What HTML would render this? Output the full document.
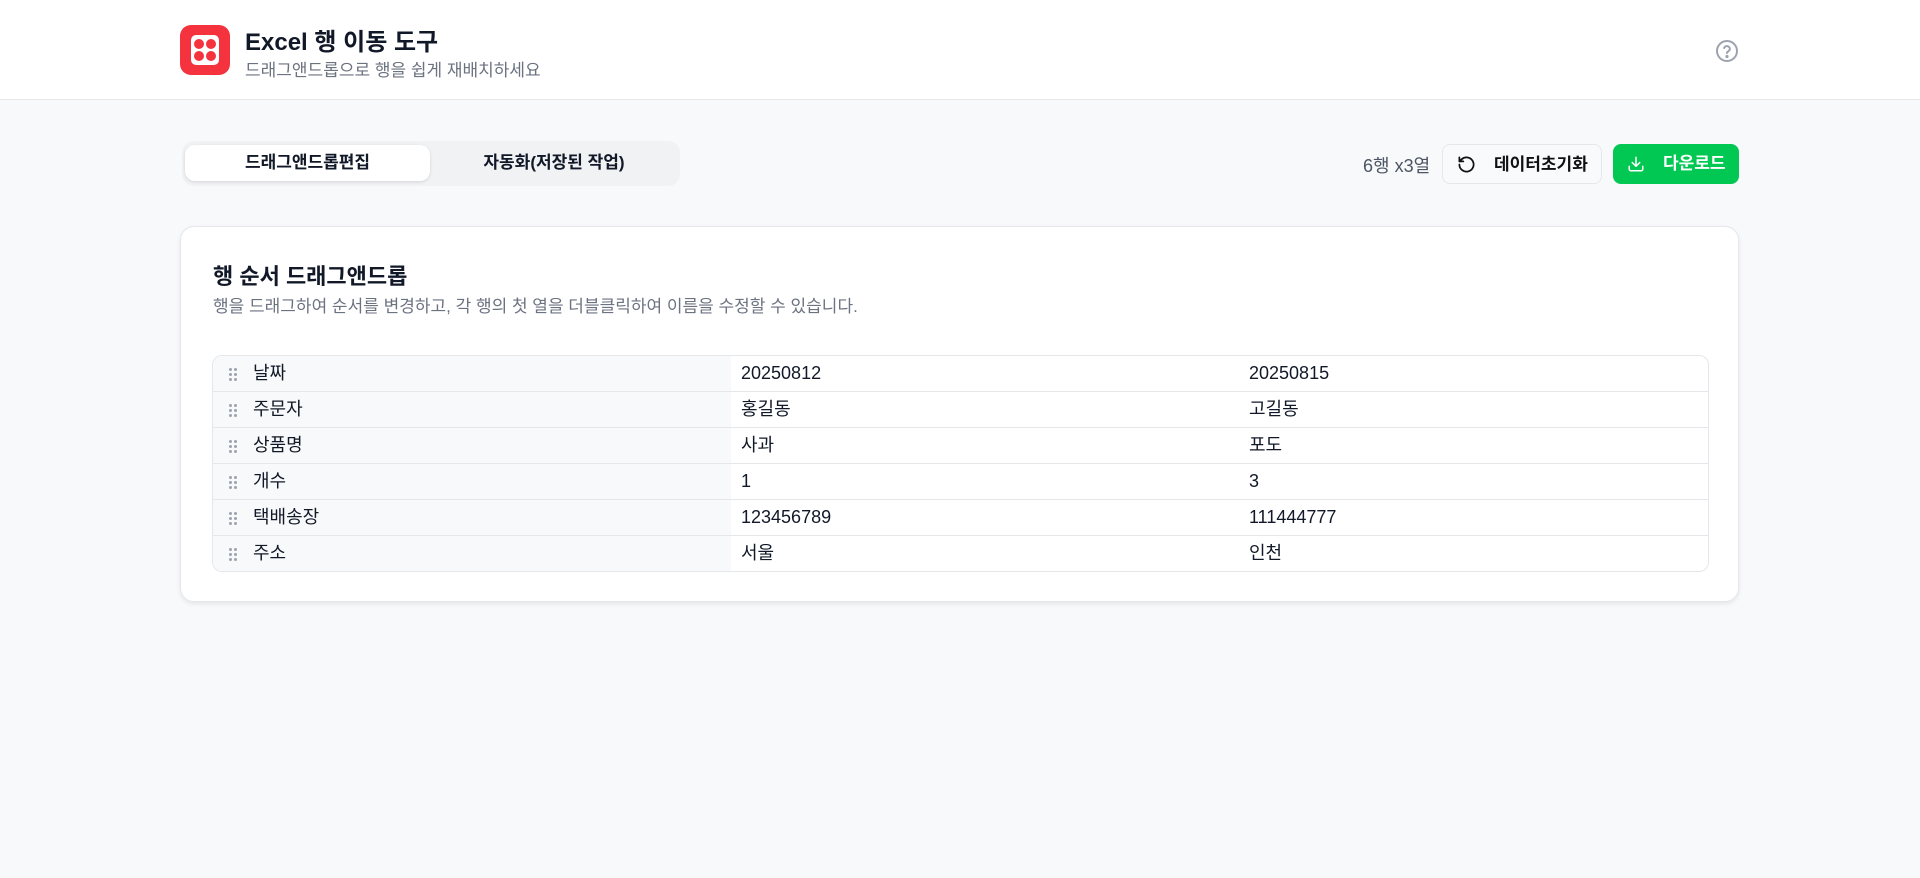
<!DOCTYPE html>
<html><head><meta charset="utf-8"><style>
*{box-sizing:border-box;margin:0;padding:0}
body{width:1920px;height:878px;background:#f8f9fa;font-family:"Liberation Sans","Noto Sans CJK KR",sans-serif;color:#111827;position:relative;overflow:hidden}
.hdr{position:absolute;left:0;top:0;width:1920px;height:100px;background:#fff;border-bottom:1px solid #e5e7eb}
.logo{position:absolute;left:180px;top:25px;width:50px;height:50px;border-radius:11px;background:#f4333f}
.logo .in{position:absolute;left:11px;top:10px;width:28px;height:30px;border-radius:5px;background:#fff}
.logo .d{position:absolute;width:10px;height:10px;border-radius:50%;background:#f4333f}
.t1{position:absolute;left:245px;top:22px;font-size:24px;font-weight:bold}
.t2{position:absolute;left:245px;top:56px;font-size:17px;color:#6b7280}
.tabs{position:absolute;left:182px;top:141px;width:498px;height:45px;background:#f1f2f4;border-radius:12px}
.tab{position:absolute;top:4px;height:36px;line-height:36px;text-align:center;font-size:17px;font-weight:bold;border-radius:10px}
.cnt{position:absolute;left:1363px;top:152px;font-size:18px;color:#4b5563}
.btn{position:absolute;top:144px;height:40px;border-radius:8px;font-size:17px;font-weight:bold;line-height:40px}
.card{position:absolute;left:180px;top:226px;width:1559px;height:376px;background:#fff;border:1px solid #e5e7eb;border-radius:14px;box-shadow:0 2px 4px rgba(0,0,0,.08)}
.ct{position:absolute;left:32px;top:32px;font-size:22px;font-weight:bold}
.cd{position:absolute;left:32px;top:65px;font-size:17px;color:#6b7280}
.tbl{position:absolute;left:31px;top:128px;width:1497px;height:217px;border:1px solid #e5e7eb;border-radius:10px;overflow:hidden}
.row{position:relative;height:36px;border-bottom:1px solid #e5e7eb;font-size:18px}
.row:last-child{border-bottom:none}
.c1{position:absolute;left:0;top:0;width:518px;height:100%;background:#f8f9fa}
.row span{position:absolute;top:0;height:35px;line-height:35px;white-space:nowrap}
.h{position:absolute;left:16px;top:12px;width:8px;height:14px}
.h i{position:absolute;width:3px;height:3px;border-radius:50%;background:#9ca3af}
</style></head><body>
<div class="hdr">
 <div class="logo"><div class="in">
  <div class="d" style="left:3px;top:4px"></div><div class="d" style="left:15px;top:4px"></div>
  <div class="d" style="left:3px;top:16px"></div><div class="d" style="left:15px;top:16px"></div>
 </div></div>
 <div class="t1">Excel 행 이동 도구</div>
 <div class="t2">드래그앤드롭으로 행을 쉽게 재배치하세요</div>
 <svg style="position:absolute;left:1715px;top:39px" width="24" height="24" viewBox="0 0 24 24" fill="none" stroke="#9ca3af" stroke-width="2" stroke-linecap="round"><circle cx="12" cy="12" r="10"/><path d="M9.1 9a3 3 0 0 1 5.8 1c0 2-3 2.5-3 4"/><circle cx="12" cy="17.5" r=".6" fill="#9ca3af"/></svg>
</div>
<div class="tabs">
 <div class="tab" style="left:3px;width:245px;background:#fff;box-shadow:0 1px 3px rgba(0,0,0,.12)">드래그앤드롭편집</div>
 <div class="tab" style="left:250px;width:244px">자동화(저장된 작업)</div>
</div>
<div class="cnt">6행 x3열</div>
<div class="btn" style="left:1442px;width:160px;background:#f9fafb;border:1px solid #e5e7eb;color:#111">
 <svg style="position:absolute;left:14px;top:10px" width="19" height="19" viewBox="0 0 24 24" fill="none" stroke="#111" stroke-width="2.2" stroke-linecap="round" stroke-linejoin="round"><path d="M3 12a9 9 0 1 0 3-6.7L3 8"/><path d="M3 3v5h5"/></svg>
 <span style="position:absolute;left:51px">데이터초기화</span></div>
<div class="btn" style="left:1613px;width:126px;background:#00c853;color:#fff">
 <svg style="position:absolute;left:14px;top:11px" width="18" height="18" viewBox="0 0 24 24" fill="none" stroke="#fff" stroke-width="2" stroke-linecap="round" stroke-linejoin="round"><path d="M21 15v4a2 2 0 0 1-2 2H5a2 2 0 0 1-2-2v-4"/><path d="M7 10l5 5 5-5"/><path d="M12 15V3"/></svg>
 <span style="position:absolute;left:50px">다운로드</span></div>
<div class="card">
 <div class="ct">행 순서 드래그앤드롭</div>
 <div class="cd">행을 드래그하여 순서를 변경하고, 각 행의 첫 열을 더블클릭하여 이름을 수정할 수 있습니다.</div>
 <div class="tbl">
  <div class="row"><div class="c1"></div><div class="h"><i style="left:0;top:0"></i><i style="left:5px;top:0"></i><i style="left:0;top:5px"></i><i style="left:5px;top:5px"></i><i style="left:0;top:10px"></i><i style="left:5px;top:10px"></i></div><span style="left:40px">날짜</span><span style="left:528px">20250812</span><span style="left:1036px">20250815</span></div>
  <div class="row"><div class="c1"></div><div class="h"><i style="left:0;top:0"></i><i style="left:5px;top:0"></i><i style="left:0;top:5px"></i><i style="left:5px;top:5px"></i><i style="left:0;top:10px"></i><i style="left:5px;top:10px"></i></div><span style="left:40px">주문자</span><span style="left:528px">홍길동</span><span style="left:1036px">고길동</span></div>
  <div class="row"><div class="c1"></div><div class="h"><i style="left:0;top:0"></i><i style="left:5px;top:0"></i><i style="left:0;top:5px"></i><i style="left:5px;top:5px"></i><i style="left:0;top:10px"></i><i style="left:5px;top:10px"></i></div><span style="left:40px">상품명</span><span style="left:528px">사과</span><span style="left:1036px">포도</span></div>
  <div class="row"><div class="c1"></div><div class="h"><i style="left:0;top:0"></i><i style="left:5px;top:0"></i><i style="left:0;top:5px"></i><i style="left:5px;top:5px"></i><i style="left:0;top:10px"></i><i style="left:5px;top:10px"></i></div><span style="left:40px">개수</span><span style="left:528px">1</span><span style="left:1036px">3</span></div>
  <div class="row"><div class="c1"></div><div class="h"><i style="left:0;top:0"></i><i style="left:5px;top:0"></i><i style="left:0;top:5px"></i><i style="left:5px;top:5px"></i><i style="left:0;top:10px"></i><i style="left:5px;top:10px"></i></div><span style="left:40px">택배송장</span><span style="left:528px">123456789</span><span style="left:1036px">111444777</span></div>
  <div class="row"><div class="c1"></div><div class="h"><i style="left:0;top:0"></i><i style="left:5px;top:0"></i><i style="left:0;top:5px"></i><i style="left:5px;top:5px"></i><i style="left:0;top:10px"></i><i style="left:5px;top:10px"></i></div><span style="left:40px">주소</span><span style="left:528px">서울</span><span style="left:1036px">인천</span></div>
 </div>
</div>
</body></html>
